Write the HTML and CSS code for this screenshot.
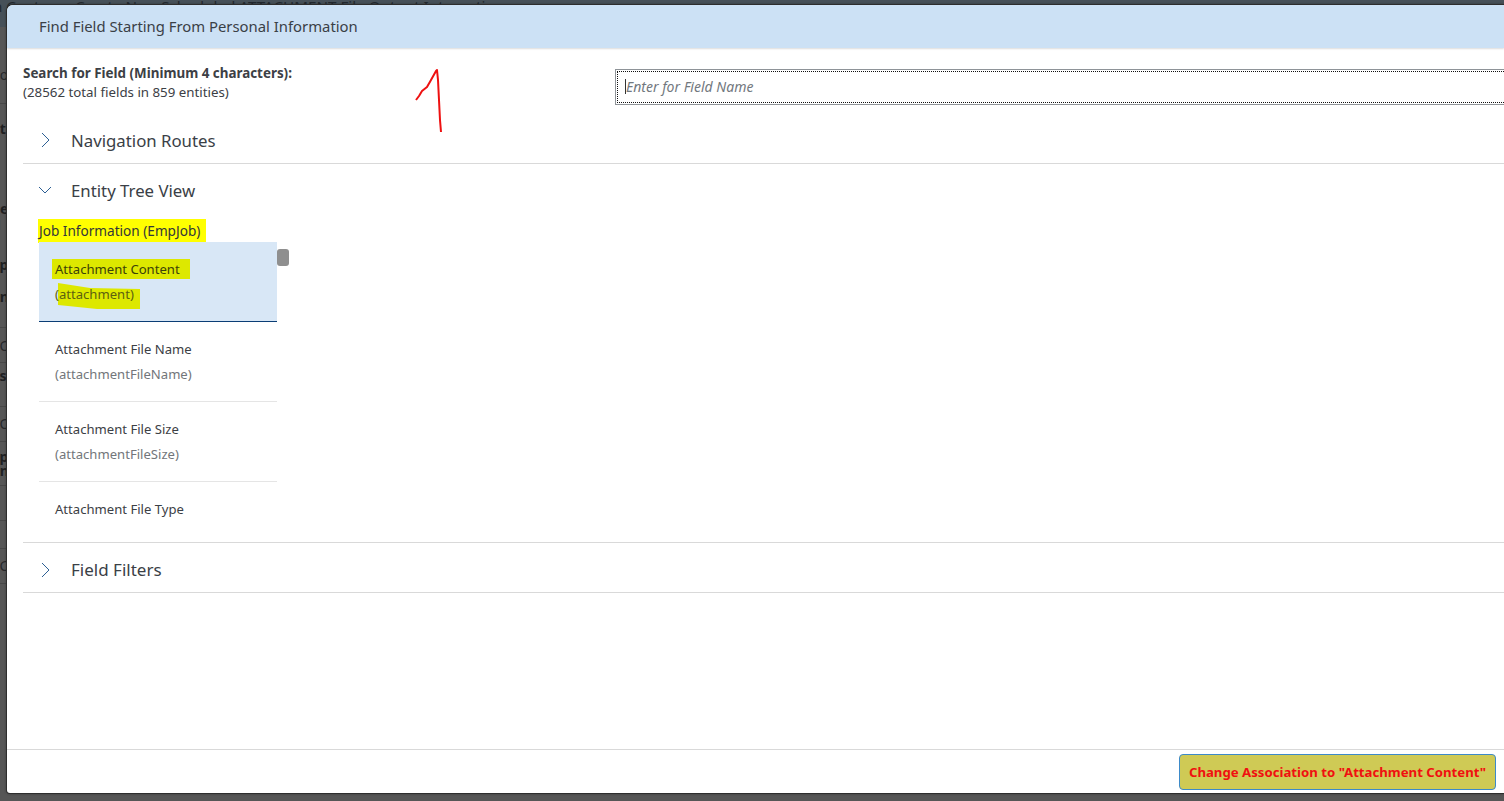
FILE: index.html
```html
<!DOCTYPE html>
<html lang="en">
<head>
<meta charset="utf-8">
<title>Find Field</title>
<link rel="stylesheet" href="styles.css">
</head>
<body>
<div class="backdrop">
  <div class="bg-title">n Center &nbsp;- &nbsp;Create New Scheduled ATTACHMENT File Output Integration</div>
  <div class="bg-row r1"><span>Co</span></div>
  <div class="bg-row r2">
    <span class="b g1">ot</span>
    <span class="b g2">ne</span>
    <span class="g3">:1</span>
    <span class="b g4">ap</span>
    <span class="b g5">on</span>
  </div>
  <div class="bg-row r3"><span>CO</span></div>
  <div class="bg-row r4"><span class="b">as</span></div>
  <div class="bg-row r5"><span>CO</span></div>
  <div class="bg-row r6"><span class="b t1">ap</span><span class="b t2">on</span></div>
  <div class="bg-row r7"><span class="i">ii</span></div>
  <div class="bg-row r8"></div>
  <div class="bg-row r9"><span>CC</span></div>
</div>
<section class="dialog">
  <header class="dialog-head">Find Field Starting From Personal Information</header>
  <main class="dialog-body">
    <div class="search-row">
      <div class="search-label">
        <div class="strong">Search for Field (Minimum 4 characters):</div>
        <div>(28562 total fields in 859 entities)</div>
      </div>
      <div class="search-input"><span class="caret"></span><span class="placeholder">Enter for Field Name</span></div>
    </div>
    <div class="panel">
      <svg class="chev" width="14" height="16" viewBox="0 0 14 16"><path d="M4 1 L11 8 L4 15" fill="none" stroke="#2c5f94" stroke-width="1"/></svg>
      <span>Navigation Routes</span>
    </div>
    <div class="panel-open">
      <div class="panel-title">
        <svg class="chev" width="14" height="14" viewBox="0 0 14 14"><path d="M1 4 L7 10 L13 4" fill="none" stroke="#2c5f94" stroke-width="1"/></svg>
        <span>Entity Tree View</span>
      </div>
      <div class="tree">
        <div class="entity"><mark class="hl">Job Information (EmpJob)</mark></div>
        <div class="list-wrap">
          <ul class="list">
            <li class="item selected">
              <div class="name"><mark class="lime">Attachment Content</mark></div>
              <div class="tech">
                <svg class="swipe" width="90" height="30" viewBox="0 0 90 30"><path d="M4 1 L36 6 L86 7 L86 27 L43 27 L14 24 L4 23 Z" fill="#dde800"/></svg>
                <span class="tech-text">(attachment)</span>
              </div>
            </li>
            <li class="item"><div class="name">Attachment File Name</div><div class="tech">(attachmentFileName)</div></li>
            <li class="item"><div class="name">Attachment File Size</div><div class="tech">(attachmentFileSize)</div></li>
            <li class="item last"><div class="name">Attachment File Type</div></li>
          </ul>
          <div class="thumb"></div>
        </div>
      </div>
    </div>
    <div class="panel panel-last">
      <svg class="chev" width="14" height="16" viewBox="0 0 14 16"><path d="M4 1 L11 8 L4 15" fill="none" stroke="#2c5f94" stroke-width="1"/></svg>
      <span>Field Filters</span>
    </div>
  </main>
  <footer class="dialog-foot"><button class="primary">Change Association to "Attachment Content"</button></footer>
  <svg class="scribble" width="40" height="80" viewBox="0 0 40 80"><path d="M1 32 L4 28 L7 23 L12 19 L16 12 L21 3 L22 2 L23 12 L24 32 L25 52 L26 64" fill="none" stroke="#ee1111" stroke-width="2" stroke-linejoin="round"/></svg>
</section>
</body>
</html>
```
FILE: styles.css
```css
html, body { margin: 0; padding: 0; height: 100%; overflow: hidden; }
body { background: #565656; font-family: "Noto Sans", "Open Sans", sans-serif; color: #3c4045; }

.backdrop { position: absolute; inset: 0; background: #565656; color: #26282b; overflow: hidden; }
.bg-title { height: 27px; box-sizing: border-box; background: #465058; color: #22282e; font-size: 15.2px; line-height: 13px; white-space: nowrap; margin-left: -7px; }
.bg-row { box-sizing: border-box; border-bottom: 1px solid #474747; font-size: 14px; line-height: 16px; }
.bg-row span { display: block; margin-left: -9px; width: 20px; white-space: nowrap; }
.bg-row .b { font-weight: 700; color: #1f2022; }
.bg-row .i { font-style: italic; }
.r1 { height: 77px; padding-top: 40px; }
.r2 { height: 224px; padding-top: 17px; }
.r2 .g2 { margin-top: 64px; }
.r2 .g3 { margin-top: 0; }
.r2 .g4 { margin-top: 24px; }
.r2 .g5 { margin-top: 16px; }
.r3 { height: 35px; padding-top: 10px; }
.r4 { height: 44px; padding-top: 5px; }
.r5 { height: 35px; padding-top: 9px; }
.r6 { height: 44px; padding-top: 8px; }
.r6 span { line-height: 14px; height: 14px; }
.r7 { height: 35px; padding-top: 10px; }
.r8 { height: 28px; }
.r9 { height: 35px; padding-top: 9px; }

.dialog { position: absolute; left: 7px; top: 5px; width: 1497px; height: 788px; background: #fff; border-radius: 6px 0 0 3px; box-shadow: 0 0 0 1px #2e2e2e, 0 0 3px #1c1c1c; display: flex; flex-direction: column; }
.dialog-head { height: 43px; flex: none; box-sizing: border-box; background: #cce1f5; border-radius: 6px 0 0 0; box-shadow: 0 1px 2px rgba(0,0,0,.14); font-size: 14.85px; line-height: 43px; padding-left: 32px; color: #3a4046; }
.dialog-body { flex: 1; padding: 0 0 0 16px; display: flex; flex-direction: column; min-height: 0; }

.search-row { display: flex; height: 66px; flex: none; }
.search-label { font-size: 13.3px; line-height: 19px; padding-top: 16px; width: 592px; flex: none; }
.strong { font-weight: 700; font-size: 13.4px; }
.search-input { margin: 21px -20px 0 0; flex: 1; height: 36px; box-sizing: border-box; border: 1px solid #8e9398; outline: 1px dotted #111; outline-offset: -3px; font-size: 14px; font-style: italic; color: #72787e; display: flex; align-items: center; padding: 0 0 2px 9px; }
.caret { width: 1px; height: 15px; background: #333; flex: none; }

.panel { height: 50px; flex: none; box-sizing: border-box; padding-top: 3px; display: flex; align-items: center; border-bottom: 1px solid #d9d9d9; font-size: 16.8px; color: #3a4046; }
.panel-last { padding-top: 4px; font-size: 17px; }
.chev { margin-left: 15px; margin-right: 19px; flex: none; }
.panel-open { height: 379px; flex: none; border-bottom: 1px solid #d9d9d9; box-sizing: border-box; }
.panel-title { height: 54px; box-sizing: border-box; padding-bottom: 2px; display: flex; align-items: center; font-size: 16.8px; color: #3a4046; }

.tree { padding-left: 16px; }
.entity { font-size: 13.6px; height: 24px; line-height: 26px; }
.hl { background: #ffff00; color: #32363a; padding: 2px 6px 3px 1px; margin-left: -1px; }

.list-wrap { display: flex; height: 280px; overflow: hidden; }
.list { list-style: none; margin: 0; padding: 0; width: 238px; flex: none; }
.item { height: 80px; box-sizing: border-box; border-bottom: 1px solid #e5e5e5; padding-left: 16px; font-size: 13.1px; }
.item.selected { background: #d8e7f6; border-bottom: 1px solid #0a3d75; isolation: isolate; }
.item.last { border-bottom: 0; }
.name { padding-top: 15px; line-height: 25px; }
.tech { line-height: 25px; color: #72767a; position: relative; }
.lime { background: #dde800; color: #3c4208; padding: 1px 10px 1px 3px; margin-left: -3px; }
.swipe { position: absolute; left: -1px; top: 0; z-index: -1; }
.tech-text { color: #5c6010; }
.thumb { width: 12px; height: 17px; background: #8f8f8f; border-radius: 3px; margin-top: 7px; flex: none; }

.dialog-foot { height: 44px; flex: none; box-sizing: border-box; border-top: 1px solid #d9d9d9; display: flex; justify-content: flex-end; align-items: center; padding-right: 8px; }
.primary { width: 317px; height: 36px; background: #cfca55; border: 1px solid #3d8ac9; border-radius: 4px; color: #f01010; font: 700 13.2px "Noto Sans", "Open Sans", sans-serif; padding: 0; }
.scribble { position: absolute; left: 408px; top: 63px; }
```
